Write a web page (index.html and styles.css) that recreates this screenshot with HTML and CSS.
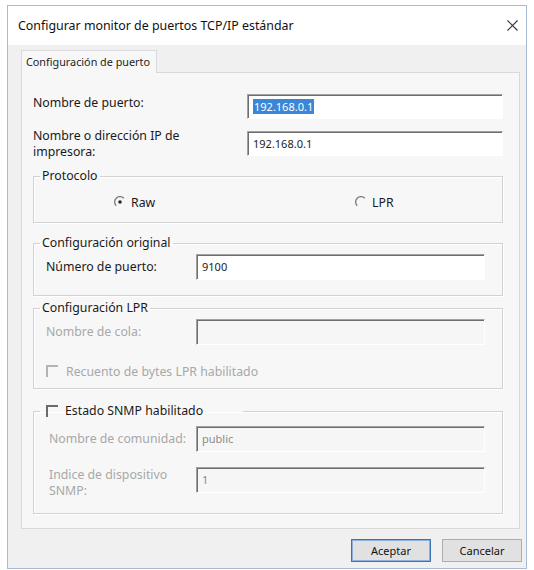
FILE: index.html
```html
<!DOCTYPE html>
<html lang="es">
<head>
<meta charset="utf-8">
<title>Configurar monitor de puertos TCP/IP estándar</title>
<link rel="stylesheet" href="styles.css">
</head>
<body>
<div class="window">
  <div class="titlebar">
    <span class="title">Configurar monitor de puertos TCP/IP estándar</span>
    <svg class="close" width="11" height="11" viewBox="0 0 11 11"><path d="M0.5 0.5 L10.5 10.5 M10.5 0.5 L0.5 10.5" stroke="#3a3a3a" stroke-width="1.2" fill="none"/></svg>
  </div>
  <div class="content">
    <div class="tab">Configuración de puerto</div>
    <div class="panel">
      <div class="top-grid">
        <div class="lbl l1">Nombre de puerto:</div>
        <div class="tb"><span class="sel">192.168.0.1</span></div>
        <div class="lbl l2">Nombre o dirección IP de<br>impresora:</div>
        <div class="tb">192.168.0.1</div>
      </div>

      <fieldset class="group g-proto">
        <legend>Protocolo</legend>
        <div class="radios">
          <div class="opt opt-raw">
            <svg class="radio" width="12" height="12" viewBox="0 0 12 12"><path d="M2.2 9.8 A5.3 5.3 0 0 1 9.8 2.2" stroke="#7a7a7a" stroke-width="1.3" fill="none"/><circle cx="6" cy="6" r="1.8" fill="#2a2a2a"/></svg>
            <span>Raw</span>
          </div>
          <div class="opt">
            <svg class="radio" width="12" height="12" viewBox="0 0 12 12"><path d="M2.2 9.8 A5.3 5.3 0 0 1 9.8 2.2" stroke="#7a7a7a" stroke-width="1.3" fill="none"/></svg>
            <span>LPR</span>
          </div>
        </div>
      </fieldset>

      <fieldset class="group g-orig">
        <legend>Configuración original</legend>
        <div class="row">
          <div class="lbl">Número de puerto:</div>
          <div class="tb wide">9100</div>
        </div>
      </fieldset>

      <fieldset class="group g-lpr">
        <legend>Configuración LPR</legend>
        <div class="row">
          <div class="lbl off">Nombre de cola:</div>
          <div class="tb wide dis"></div>
        </div>
        <div class="check-row">
          <svg class="check" width="12" height="12" viewBox="0 0 12 12"><path d="M1 12 V1 H12" stroke="#b4b4b4" stroke-width="2" fill="none"/></svg>
          <span class="off">Recuento de bytes LPR habilitado</span>
        </div>
      </fieldset>

      <fieldset class="group g-snmp">
        <legend class="check-legend">
          <svg class="check" width="12" height="12" viewBox="0 0 12 12"><path d="M1 12 V1 H12" stroke="#6a6a6a" stroke-width="2" fill="none"/></svg>
          <span>Estado SNMP habilitado</span>
        </legend>
        <div class="row snmp-row1">
          <div class="lbl off">Nombre de comunidad:</div>
          <div class="tb wide dis">public</div>
        </div>
        <div class="row snmp-row2">
          <div class="lbl off two">Indice de dispositivo<br>SNMP:</div>
          <div class="tb wide dis">1</div>
        </div>
      </fieldset>
    </div>

    <div class="buttons">
      <div class="btn default">Aceptar</div>
      <div class="btn">Cancelar</div>
    </div>
  </div>
</div>
</body>
</html>
```

FILE: styles.css
```css
html, body {
  margin: 0;
  padding: 0;
  background: #ffffff;
}

body {
  font-family: "Noto Sans", "Open Sans", sans-serif;
  font-size: 12.3px;
  color: #1a1a1a;
}

.window {
  margin: 5px 0 0 7px;
  width: 520px;
  height: 564px;
  box-sizing: border-box;
  border: 1px solid #a9bbd4;
  background: #f0f0f0;
  display: flex;
  flex-direction: column;
}

.titlebar {
  height: 39px;
  flex: none;
  background: #ffffff;
  display: flex;
  align-items: center;
  justify-content: space-between;
  padding: 0 8px 0 10px;
}

.title {
  font-size: 12.4px;
  color: #111;
}

.close {
  display: block;
  margin-top: -1px;
}

.content {
  padding: 5px 5px 0 13px;
}

.tab {
  width: 136px;
  height: 23px;
  box-sizing: border-box;
  border: 1px solid #d9d9d9;
  border-bottom: none;
  background: #f7f7f7;
  font-size: 10.8px;
  line-height: 21px;
  padding-left: 4px;
  color: #1e1e1e;
  position: relative;
  z-index: 1;
  margin-bottom: -1px;
}

.panel {
  width: 499px;
  height: 457px;
  box-sizing: border-box;
  border: 1px solid #d9d9d9;
  background: #f7f7f7;
  padding: 0 16px 0 11px;
}

.top-grid {
  display: grid;
  grid-template-columns: 214px 256px;
  row-gap: 12px;
  margin-top: 21px;
  align-items: start;
}

.lbl {
  line-height: 16px;
  white-space: nowrap;
}

.l1 {
  padding-top: 1px;
}

.l2 {
  margin-top: -3px;
}

.off {
  color: #a8a8a8;
}

.tb {
  height: 25px;
  box-sizing: border-box;
  background: #ffffff;
  border-top: 1px solid #a2a2a2;
  border-left: 1px solid #a2a2a2;
  border-right: 1px solid #ffffff;
  border-bottom: 1px solid #ffffff;
  box-shadow: inset 1px 1px 0 #6e6e6e;
  padding: 4px 5px 0 5px;
  font-size: 11px;
  line-height: 16px;
  color: #222;
}

.tb.wide {
  width: 289px;
  height: 26px;
}

.tb.dis {
  background: #f6f6f6;
  color: #8a8a8a;
}

.sel {
  background: #3b86d6;
  color: #ffffff;
  padding: 0 1px;
}

.group {
  margin: 0;
  padding: 0;
  min-width: 0;
  box-sizing: border-box;
  border: 1px solid #d2d2d2;
  box-shadow: inset 1px 1px 0 #ffffff, 1px 1px 0 #ffffff;
}

.group legend {
  margin-left: 6px;
  padding: 0 2px;
  line-height: 16px;
  color: #1a1a1a;
}

.g-proto {
  margin-top: 8px;
  height: 55px;
}

.radios {
  display: flex;
  margin-top: 11px;
  padding-left: 80px;
  height: 14px;
  align-items: center;
}

.opt {
  display: flex;
  align-items: center;
  gap: 5px;
}

.opt-raw {
  width: 241px;
}

.radio {
  display: block;
  flex: none;
}

.g-orig {
  margin-top: 12px;
  height: 61px;
}

.row {
  display: flex;
  align-items: center;
  padding-left: 12px;
  margin-top: 3px;
}

.row .lbl {
  width: 150px;
}

.g-lpr {
  margin-top: 4px;
  height: 89px;
}

.check-row {
  display: flex;
  align-items: center;
  gap: 8px;
  padding-left: 12px;
  margin-top: 19px;
  height: 14px;
}

.check {
  display: block;
  flex: none;
}

.g-snmp {
  margin-top: 14px;
  height: 111px;
}

.group legend.check-legend {
  display: flex;
  align-items: center;
  gap: 7px;
  box-sizing: border-box;
  width: 203px;
  padding: 0 0 0 6px;
}

.g-snmp .row {
  padding-left: 15px;
}

.g-snmp .row .lbl {
  width: 147px;
}

.snmp-row1 {
  margin-top: 7px;
}

.snmp-row2 {
  margin-top: 15px;
  align-items: flex-start;
}

.lbl.two {
  margin-top: 0;
}

.buttons {
  display: flex;
  justify-content: flex-end;
  gap: 11px;
  margin-top: 10px;
  width: 501px;
}

.btn {
  width: 80px;
  height: 23px;
  box-sizing: border-box;
  border: 1px solid #adadad;
  background: #e1e1e1;
  font-size: 11px;
  line-height: 21px;
  text-align: center;
  color: #111;
}

.btn.default {
  border-color: #3c74b8;
  box-shadow: inset 0 0 0 1px #8fb0da;
}
```
